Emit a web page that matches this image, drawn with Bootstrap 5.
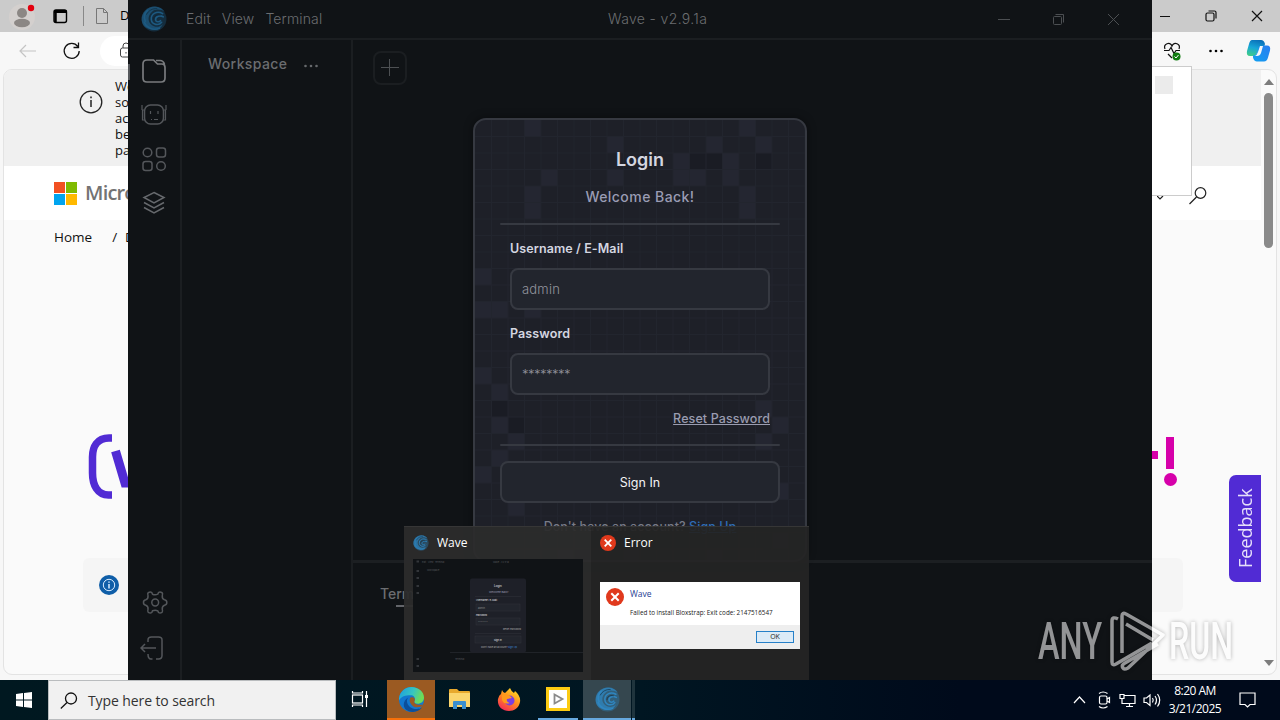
<!DOCTYPE html>
<html lang="en">
<head>
  <meta charset="UTF-8">
  <title>Wave - v2.9.1a</title>
  <meta name="viewport" content="width=device-width, initial-scale=1">
  <link href="https://cdn.jsdelivr.net/npm/bootstrap@5.3.2/dist/css/bootstrap.min.css" rel="stylesheet">
  <style>
    body { font-family: "Open Sans", "Noto Sans", sans-serif; font-size: 13px; color: #111; }
    svg { display: block; flex: none; }
    .desktop { width: 1280px; height: 720px; background: #eef2f8; }
    .win { position: absolute; top: 0; height: 680px; }

    /* browser behind */
    .browser { left: 0; width: 1280px; background: #f7f7f7; }
    .tabstrip { height: 32px; background: #cbcbcb; }
    .toolbar { height: 37px; }
    .toolbar .address { width: 60px; height: 30px; border-radius: 15px; background: #fff; margin-left: 19px; padding-left: 19px; }
    .webpage { margin: 0 3px 5px; border: 1px solid #e3e3e3; border-radius: 9px; background: #fafafa; }
    .content-col { width: 1257px; }
    .notice { height: 96px; background: #f0f0f0; padding: 8px 0 0 75px; line-height: 16px; }
    .sitehead { height: 54px; background: #fff; padding-left: 50px; }
    .mslogo { font-size: 20px; font-weight: 600; color: #737373; letter-spacing: -.8px; margin-left: 4px; }
    .crumbs { height: 34px; padding-left: 50px; font-size: 13.5px; }
    .hero { margin-top: 179px; height: 76px; padding: 0 79px 0 84px; }
    .note-box { margin: 49px 78px 0 79px; height: 54px; background: #f5f5f5; border-radius: 6px; padding-left: 16px; }
    .scrollbar { width: 15px; padding: 9px 0 8px; }
    .scrollbar .thumb { width: 9px; height: 155px; border-radius: 5px; background: #8a8a8a; margin-top: 8px; }
    .feedback { position: absolute; left: 1229px; top: 475px; width: 32px; height: 107px; background: #512bd4; border-radius: 0 7px 7px 0; color: #e6dffa; font-size: 18px; writing-mode: vertical-rl; transform: rotate(180deg); }
    .popup { position: absolute; left: 1100px; top: 66px; width: 92px; height: 130px; background: #fff; border: 1px solid #ccc; padding: 9px 18px; }
    .popup div { width: 18px; height: 18px; background: #ebebeb; }

    /* Wave */
    .wave { left: 128px; width: 1024px; background: #101316; color: #6b6d70; font-family: Inter, "Open Sans", sans-serif; }
    .titlebar { height: 40px; border-bottom: 2px solid #1b1e21; font-size: 14px; font-weight: 300; padding-left: 13px; }
    .titlebar .menu { margin-left: 19px; gap: 11px; width: 422px; letter-spacing: .15px; padding-bottom: 1px; }
    .titlebar .caption { letter-spacing: .35px; padding-bottom: 1px; }
    .titlebar .buttons { margin-left: auto; padding-right: 0; margin-right: -2px; }
    .rail { width: 54px; border-right: 2px solid #1b1e21; padding: 18px 0 16px; }
    .rail::before { content: ""; position: absolute; left: 0; top: 64px; width: 2px; height: 16px; background: #55585c; }
    .side { width: 171px; border-right: 2px solid #1b1e21; padding: 13px 0 0 26px; font-size: 14px; font-weight: 500; }
    .editor { height: 520px; padding: 11px 20px; }
    .plus { width: 34px; height: 34px; border: 2px solid #1b1e21; border-radius: 8px; }
    .terminal { border-top: 3px solid #1c1f22; padding: 20px 27px; font-size: 14px; font-weight: 500; }
    .terminal i { display: block; width: 36px; height: 2px; background: #63656a; margin: 1px 0 0 16px; }

    .login { position: absolute; left: 345px; top: 118px; width: 334px; height: 444px; border: 2px solid #363941; border-radius: 13px; background: #1e2028; color: #d4d6e0; padding: 27px 25px; overflow: hidden; box-shadow: 0 0 10px #0006; }
    .tiles { position: absolute; left: 0; top: 0; opacity: .62; }
    .login-form { position: relative; }
    .login h1 { font-size: 18px; font-weight: 600; line-height: 25px; margin: 0; }
    .login .sub { font-size: 14px; font-weight: 500; line-height: 20px; margin-top: 15px; color: #9a9cb4; }
    .rule { height: 2px; border-radius: 2px; background: #363941; }
    .login label { font-size: 12.5px; font-weight: 600; line-height: 18px; letter-spacing: .1px; }
    .login .form-control { height: 42px; border: 2px solid #363941; border-radius: 8px; background: #22252d; color: #92949d; font-size: 13px; font-weight: 300; padding: 0 10px; line-height: 38px; }
    .login .btn { height: 42px; border: 2px solid #363941; border-radius: 8px; background: #22252d; color: #f3f3f5; font-size: 12.5px; padding: 2px 0 0; }

    /* thumbnails over the taskbar */
    .flyout { position: absolute; left: 404px; top: 526px; width: 405px; height: 154px; background: #242424f0; color: #fff; font-size: 12px; border-top: 1px solid #363636; }
    .thumb-item { padding: 7px 0 0 9px; }
    .thumb-item.first { width: 187px; background: #ffffff09; }
    .mini-wave { width: 170px; height: 113px; background: #101316; margin-top: 7px; color: #777; }
    .mini-error { width: 200px; height: 67px; margin-top: 30px; background: #fff; color: #222; }
    .mini-error .foot { height: 24px; background: #eee; padding-right: 6px; }
    .mini-error .ok { width: 38px; height: 12px; border: 1px solid #2680c8; background: #dcebf7; font-size: 7px; line-height: 10px; }

    .taskbar { position: absolute; left: 0; top: 680px; width: 1280px; height: 40px; background: linear-gradient(90deg, #001820 0, #001622 50%, #000a1b 75%, #000a1b); color: #fff; font-size: 12px; }
    .start { width: 48px; }
    .searchbox { width: 288px; height: 40px; background: #f1f1f1; border: 1px solid #b9bcbe; color: #333; font-size: 14px; padding: 1px 0 0 11px; }
    .task { width: 48px; height: 40px; border-bottom: 2px solid transparent; }
    .watermark { position: absolute; left: 1036px; top: 606px; filter: drop-shadow(0 0 2px #0008); opacity: .55; }
  </style>
</head>
<body>
<!-- shared symbols -->
<svg width="0" height="0" class="position-absolute">
  <symbol id="swirl" viewBox="0 0 24 24">
    <circle cx="12" cy="12" r="11.500" fill="currentColor" opacity=".38"/>
    <path d="M1 15C-1 8 5 .5 13 .5c4 0 7 2 9 5-4-3-9-3-12 0-4 3.500-4 9 0 12 3 2.500 8 2 10-1-1 4-5 6-9 5.500C6 21.500 2 19 1 15z" fill="currentColor" opacity=".75"/>
    <path d="M20 7c-5-3-11 0-10.500 5.500.5 5 7 6 9.500 2.500M20.500 10c-4-2-7.500 0-7 3 .5 2 3.500 2 4.500.5M3 15c2 5 8 8 14 5.500M6 4C2 8 3 12 4 14" fill="none" stroke="currentColor" stroke-width="1.500" stroke-linecap="round"/>
    <path d="M18 8.500c-4-1-6.500 1-6.500 4M5 8c2-4 6-6 10-5.500" fill="none" stroke="#0d2333" stroke-width=".8" opacity=".7"/>
  </symbol>
  <symbol id="err" viewBox="0 0 16 16"><circle cx="8" cy="8" r="8" fill="#e0391c"/><path d="M4.700 4.700l6.600 6.600M11.300 4.700l-6.600 6.600" stroke="#fff" stroke-width="1.800"/></symbol>
</svg>

<div class="desktop position-relative overflow-hidden">

  <div class="win browser d-flex flex-column">
    <div class="tabstrip d-flex align-items-center">
      <svg width="128" height="32" fill="none">
        <circle cx="22" cy="17" r="13" fill="#d4d0ce"/><circle cx="22" cy="13" r="5" fill="#8c8784"/><ellipse cx="22" cy="23" rx="8" ry="4.200" fill="#8c8784"/><circle cx="31" cy="8" r="3.200" fill="#e3000f"/>
        <rect x="54" y="10" width="12.500" height="12.500" rx="2" stroke="#000" stroke-width="1.400"/><path d="M54 11.500h12.500" stroke="#000" stroke-width="3"/><path d="M55.500 12v10" stroke="#000" stroke-width="2.500"/>
        <path d="M83.500 6v20" stroke="#888"/>
        <path d="M96.500 8.500h7l4 4v11h-11zM103.500 8.500v4h4" stroke="#777"/>
        <text x="120" y="20" fill="#000" font-size="13">D</text>
      </svg>
      <svg class="ms-auto" width="128" height="32" fill="none" stroke="#111" stroke-width="1.200">
        <path d="M8 16.500h10M100 11l10 10M110 11l-10 10"/><rect x="54" y="13" width="8" height="8" rx="1.500"/><path d="M56.500 11h6q1.500 0 1.500 1.500v6"/>
      </svg>
    </div>
    <div class="toolbar d-flex align-items-center">
      <svg width="81" height="37" fill="none"><path d="M21 19h15M26 13l-6 6 6 6" stroke="#c4c4c4" stroke-width="1.200"/><path d="M77.800 14.500a7.500 7.500 0 1 0 1.400 4.500M78.500 10.500v5h-5" stroke="#111" stroke-width="1.300"/></svg>
      <div class="address d-flex align-items-center"><svg width="14" height="18" fill="none" stroke="#444"><rect x="1.500" y="6" width="11" height="9" rx="2"/><path d="M4 6V4a3 3 0 0 1 6 0v2M7 10v1.500"/></svg></div>
      <svg class="ms-auto" width="128" height="37" fill="none">
        <path d="M16 22l4 4M13 17c-2-5 5-8 7-3 2-5 9-2 7 3M12 18.500h5l2-3 3 6 2-3h4" stroke="#111" stroke-width="1.200"/><circle cx="24.500" cy="24.500" r="4" fill="#107c10"/><path d="M22.500 24.500l1.500 1.500 2.500-3" stroke="#fff"/>
        <circle cx="58.500" cy="19" r="1.300" fill="#000"/><circle cx="64" cy="19" r="1.300" fill="#000"/><circle cx="69.500" cy="19" r="1.300" fill="#000"/>
        <defs><linearGradient id="cp1" x1=".6" y1="0" x2=".3" y2="1"><stop stop-color="#0a6fb8"/><stop offset=".5" stop-color="#17a6d8"/><stop offset="1" stop-color="#3ecb8a"/></linearGradient><linearGradient id="cp2" x1="1" y1="0" x2="0" y2="1"><stop stop-color="#2a7df0"/><stop offset="1" stop-color="#11a0f0"/></linearGradient></defs>
        <path d="M100 8h9q3 0 4 4l-1 3h-4l-3 6q-1 3-4 3h-3q-4 0-3-5l2-7q1-4 3-4z" fill="url(#cp1)"/>
        <path d="M112 13.500h3q4 0 3 5l-2 7q-1 4-4 4h-7q-3 0-4-4v-2q3 0 4-3l2-6z" fill="url(#cp2)"/>
        <path d="M108 14h3l-2 7q-1 3-4 3h-2q2-1 3-4z" fill="#f7f7f7"/>
      </svg>
    </div>
    <div class="webpage flex-grow-1 d-flex overflow-hidden">
      <div class="content-col">
        <div class="notice d-flex">
          <svg style="margin:12px 10px 0 0" width="26" height="26" fill="none" stroke="#222" stroke-width="1.300"><circle cx="12" cy="12" r="10.800"/><path d="M12 10v7M12 6.500v1.800" stroke-width="1.500"/></svg>
          <div>We<br>some<br>access<br>before<br>pages</div>
        </div>
        <div class="sitehead d-flex align-items-center">
          <svg width="23" height="23"><path fill="#f25022" d="M0 0h11v11H0z"/><path fill="#7fba00" d="M12 0h11v11H12z"/><path fill="#00a4ef" d="M0 12h11v11H0z"/><path fill="#ffb900" d="M12 12h11v11H12z"/></svg>
          <span class="mslogo ps-1">Microsoft</span>
          <svg class="ms-auto" width="104" height="30" fill="none" stroke="#222" stroke-width="1.200"><path d="M0 18l3 3 3-3"/><circle cx="43.500" cy="15" r="5.300"/><path d="M39.500 19l-7 7"/></svg>
        </div>
        <div class="crumbs d-flex align-items-center"><span>Home</span><span class="ms-3 ps-1">/</span><span class="ms-2">Download</span></div>
        <div class="hero d-flex justify-content-between">
          <svg width="60" height="76" fill="none" stroke="#512bd4"><path d="M24 5h-3C9 5 4.500 14 4.500 24v16c0 12 5 22 16 22H24" stroke-width="7.500"/><path d="M27.500 18l9.500 32h5" stroke-width="9"/></svg>
          <svg width="57" height="76" fill="#d600aa"><path d="M0 18h33v8H0zM41 4h8v32h-8z"/><circle cx="45.500" cy="46.500" r="6.500"/></svg>
        </div>
        <div class="note-box d-flex align-items-center"><svg width="20" height="20" fill="none" stroke="#d9ecff"><circle cx="10" cy="10" r="10" fill="#0f5ea8" stroke="none"/><circle cx="10" cy="10" r="5.700"/><path d="M10 9v4.500M10 6.500v1.300" stroke-width="1.500"/></svg></div>
      </div>
      <div class="scrollbar d-flex flex-column align-items-center">
        <svg width="10" height="6"><path d="M5 0l5 6H0z" fill="#7d7d7d"/></svg><div class="thumb"></div>
        <svg class="mt-auto" width="10" height="6"><path d="M5 6l5-6H0z" fill="#7d7d7d"/></svg>
      </div>
    </div>
    <div class="popup d-flex justify-content-end"><div></div></div>
    <div class="feedback d-flex align-items-center justify-content-center">Feedback</div>
  </div>

  <div class="win wave d-flex flex-column">
    <div class="titlebar d-flex align-items-center">
      <svg width="26" height="26" style="color:#1d5a82"><use href="#swirl"/></svg>
      <div class="menu d-flex"><span>Edit</span><span>View</span><span>Terminal</span></div>
      <span class="caption">Wave - v2.9.1a</span>
      <svg class="buttons" width="156" height="20" fill="none" stroke="#4c4f52"><path d="M0 10.500h12M110 5l11 11M121 5l-11 11"/><rect x="55.500" y="7.500" width="8" height="8" rx="1"/><path d="M57.500 5.500h8v8"/></svg>
    </div>
    <div class="d-flex flex-grow-1">
      <div class="rail d-flex flex-column align-items-center">
        <svg width="28" height="160" fill="none" stroke="#54575b" stroke-width="1.500">
          <path stroke="#797b7e" stroke-width="1.700" d="M7 2h6.500l4 4H22q3 0 3 3.500V20q0 4-4 4H7q-4 0-4-4V6q0-4 4-4zM16 2.500h4q3.500 0 4.500 4"/>
          <rect x="4.500" y="47" width="19" height="19" rx="6"/><path d="M4.500 52h-2v10h2M23.500 52h2v10h-2M2 47v5M26 47v5M10.500 53v3M18 53v3M11 61.500h1M14 61.500h4" stroke-width="1.200"/>
          <circle cx="7.500" cy="94.500" r="4.300"/><rect x="16.500" y="90" width="9" height="9" rx="2.500"/><rect x="3" y="103.500" width="9" height="9" rx="2.500"/><circle cx="21" cy="108" r="4.300"/>
          <path stroke="#66696d" d="M14 134.500l10 5-10 5.500-10-5.500zM4 144.500l10 5.500 10-5.500M4 149.500l10 5.500 10-5.500"/>
        </svg>
        <svg class="mt-auto" width="28" height="75" fill="none" stroke="#54575b" stroke-width="1.500">
          <path stroke-linejoin="round" d="M12.500 5.200Q15.200 6.500 17.800 5.200L18.500 3.500Q20 2.300 22 3.600 23 4.600 22.300 6.500 21.800 9.800 24.500 10.700 27 11.200 26.800 13.500 27 15.800 24.500 16.200 21.800 17.200 22.300 20.500 23 22.400 22 23.400 20 24.700 18.500 23.500L17.800 21.800Q15.200 20.500 12.500 21.800L11.800 23.500Q10.300 24.700 8.300 23.400 7.300 22.400 8 20.500 8.500 17.200 5.800 16.200 3.300 15.800 3.500 13.500 3.300 11.200 5.800 10.700 8.500 9.800 8 6.500 7.300 4.600 8.300 3.600 10.300 2.300 11.800 3.500z"/>
          <circle cx="15.200" cy="13.500" r="3.400"/>
          <path d="M8 53v-2q0-3 3.500-3h7Q22 48 22 51v15.500q0 3.500-3.500 3.500H16M8 65q0 5 3 5h1.500M1 59h15M5 55l-4 4 4 4"/>
        </svg>
      </div>
      <div class="side d-flex align-items-start"><span style="letter-spacing:.4px">Workspace</span><svg class="ms-3 mt-2" width="18" height="8" fill="#66696c"><circle cx="2.500" cy="5" r="1.300"/><circle cx="8" cy="5" r="1.300"/><circle cx="13.500" cy="5" r="1.300"/></svg></div>
      <div class="flex-grow-1">
        <div class="editor"><div class="plus d-flex align-items-center justify-content-center"><svg width="20" height="20" stroke="#4d5053"><path d="M9.500 1v17M1 9.500h18"/></svg></div></div>
        <div class="terminal">Terminal<i></i></div>
      </div>
    </div>

    <div class="login">
      <svg class="tiles" id="tiles" width="332" height="442"></svg>
      <div class="login-form">
        <h1 class="text-center">Login</h1>
        <div class="sub text-center" style="letter-spacing:.45px">Welcome Back!</div>
        <div class="rule" style="margin-top:16px"></div>
        <div style="padding:15px 10px 0">
          <label class="d-block">Username / E-Mail</label>
          <div class="form-control" style="margin-top:10px;letter-spacing:.2px">admin</div>
          <label class="d-block" style="margin-top:15px">Password</label>
          <div class="form-control" style="margin-top:10px;letter-spacing:-.5px">********</div>
          <div class="text-end text-decoration-underline" style="margin-top:15px;font-size:12.5px;line-height:18px;font-weight:500;letter-spacing:.1px;color:#9a9cb0">Reset Password</div>
        </div>
        <div class="rule" style="margin-top:16px"></div>
        <button class="btn w-100 d-block" style="margin-top:15px">Sign In</button>
        <div class="text-center" style="margin-top:15px;font-size:12.5px;line-height:18px;font-weight:500;letter-spacing:.07px;color:#777a86">Don't have an account? <span class="text-decoration-underline" style="color:#2f6cb5">Sign Up</span></div>
      </div>
    </div>
  </div>

  <svg class="watermark" width="220" height="70" fill="none" stroke="#fff" stroke-width="3.500" stroke-linejoin="round">
    <g fill="#fff" stroke="none" font-family="Roboto, sans-serif" font-size="51" font-weight="500"><text x="2" y="53" textLength="64" lengthAdjust="spacingAndGlyphs">ANY</text><text x="133" y="53" textLength="64" lengthAdjust="spacingAndGlyphs">RUN</text></g>
    <path d="M82 13q-6-3-6 2v41q0 4 4 2l36-21M86 47V10q0-4 4-2l37 21-35 33q-4 2-5 0-2-3 2-5l33-19M90 18l27 16"/>
  </svg>

  <div class="flyout d-flex">
    <div class="thumb-item first">
      <div class="d-flex align-items-center"><svg width="16" height="16" style="color:#2c80b8"><use href="#swirl"/></svg><span class="ms-2">Wave</span></div>
      <svg class="mini-wave" viewBox="0 0 170 113" fill="#85878d" font-size="3" font-family="Inter, sans-serif">
        <g font-size="2.300" fill="#55585c"><text x="9" y="4">Edit</text><text x="15" y="4">View</text><text x="22" y="4">Terminal</text><text x="80" y="4">Wave - v2.9.1a</text><text x="14" y="12">Workspace</text><text x="42" y="101">Terminal</text></g>
        <path d="M3.500 2.500h2.500M3.500 12h2.500M3.500 19h2.500M3.500 27h2.500M3.500 34h2.500M3.500 100h2.500M3.500 107h2.500" stroke="#33363a" stroke-width="2"/>
        <path d="M37 93.500h133" stroke="#202328"/>
        <rect x="57" y="19.500" width="56" height="74" rx="2" fill="#1e2028"/>
        <path d="M62 37.500h46M62 74.500h46" stroke="#30333b" stroke-width=".5"/><g fill="#22252d" stroke="#30333b" stroke-width=".5"><rect x="63" y="45" width="44" height="7"/><rect x="63" y="59" width="44" height="7"/><rect x="62" y="77" width="46" height="7"/></g>
        <g fill="#e2e3e8"><text x="81" y="27.500">Login</text><text x="76" y="33.500" font-size="2.700" fill="#9a9cb4">Welcome Back!</text><text x="63" y="42" font-size="2.400">Username / E-Mail</text><text x="63" y="56.500" font-size="2.400">Password</text><text x="65" y="49.500" font-size="2.400" fill="#888">admin</text><text x="65" y="63.500" font-size="2.400" fill="#888">********</text><text x="90" y="71" font-size="2.400" fill="#aaa">Reset Password</text><text x="81" y="81.500" font-size="2.400">Sign In</text><text x="68" y="89" font-size="2.400" fill="#aaa">Don't have an account?</text><text x="95" y="89" font-size="2.400" fill="#3f8cdc">Sign Up</text></g>
      </svg>
    </div>
    <div class="thumb-item">
      <div class="d-flex align-items-center"><svg width="16" height="16"><use href="#err"/></svg><span class="ms-2">Error</span></div>
      <div class="mini-error d-flex flex-column">
        <div class="d-flex flex-grow-1 pt-1">
          <svg style="margin:2px 6px" width="18" height="18"><use href="#err"/></svg>
          <div><div style="font-size:8.500px;line-height:16px;color:#1f4294">Wave</div><div class="text-nowrap" style="font-size:6.300px;line-height:21px">Failed to install Bloxstrap: Exit code: 2147516547</div></div>
        </div>
        <div class="foot d-flex align-items-center justify-content-end"><div class="ok text-center">OK</div></div>
      </div>
    </div>
  </div>

  <div class="taskbar d-flex align-items-center">
    <div class="start d-flex justify-content-center"><svg width="16" height="16" fill="#fff"><path d="M0 2l7-1v6.500H0zM8 .9L16 0v7.500H8zM0 8.500h7V15l-7-1zM8 8.500h8V16l-8-1z"/></svg></div>
    <div class="searchbox d-flex align-items-center"><svg width="18" height="18" fill="none" stroke="#111" stroke-width="1.300"><circle cx="11" cy="6.500" r="5.500"/><path d="M7 10.500L.8 16.500"/></svg><span style="margin-left:10px;letter-spacing:-.1px">Type here to search</span></div>
    <div class="task d-flex align-items-center justify-content-center"><svg width="18" height="18" fill="none" stroke="#fff" stroke-width="1.200"><rect x="1.500" y="5" width="10" height="8"/><path d="M1.500 1v2h10V1M1.500 17v-2h10v2M15.500 1v16"/><path d="M15.500 5v3" stroke-width="3"/></svg></div>
    <div class="task d-flex align-items-center justify-content-center" style="background:#9b5a22;border-color:#f7700a;margin-left:3px">
      <svg width="25" height="25" viewBox="0 0 24 24"><defs><linearGradient id="e1" x1="0" y1="0" x2="1" y2=".3"><stop stop-color="#1b9de2"/><stop offset=".6" stop-color="#36c5c0"/><stop offset="1" stop-color="#6fdc55"/></linearGradient></defs><circle cx="12" cy="12" r="12" fill="#1277cf"/><path d="M0 11C1 4 6 0 12 0c7 0 12 5 12 10 0 4-3 6-6 6s-4-1-3-3c1-3-1-5-4-5C6 8 2 9 0 13z" fill="url(#e1)"/><path d="M9 10c-3 3-1 10 6 11 3 .4 5 0 7-1-4 5-12 5-16 1-3-4-1-9 3-11z" fill="#0c4f9b"/><path d="M11 10c3-1 5 1 4 3-1 2 0 3.500 3 4h5l-1 1.500c-4 2-9 1-11-3-1-2-1-4 0-5.500z" fill="#9b5a22"/></svg>
    </div>
    <div class="task d-flex align-items-center justify-content-center" style="margin-left:1px"><svg width="22" height="20"><path d="M0 1q0-1 1-1h7l2 2h10q1 0 1 1v15H0z" fill="#e8a92d"/><path d="M0 4h21v14H0z" fill="#fbd56d"/><path d="M4 20v-7q0-1 1-1h11q1 0 1 1v7h-4v-4H8v4z" fill="#3a8fd0"/></svg></div>
    <div class="task d-flex align-items-center justify-content-center" style="margin-left:1px"><svg width="24" height="24"><defs><linearGradient id="ff" x1=".8" y1="0" x2=".2" y2="1"><stop stop-color="#ffe226"/><stop offset=".5" stop-color="#ff8a1e"/><stop offset="1" stop-color="#f5235c"/></linearGradient></defs><path d="M5 3q1 3 3 3l5-5q1 3 4 5l1-2q6 5 5 11c-1 6-6 9-11 9C5 24 0 19 1 12q1-4 3-5z" fill="url(#ff)"/><circle cx="12.500" cy="13.500" r="5" fill="#7a3fe0"/><path d="M5 8q5-2 8 1l2 2-5 1q-1 3 3 4-6 2-8-3z" fill="#ff9a1c"/></svg></div>
    <div class="task d-flex align-items-center justify-content-center" style="border-color:#67a9df;width:40px;margin:0 5px"><svg width="24" height="24"><path fill="#fccb12" d="M0 0h24v24H0z"/><path fill="#fff" d="M3 3h18v18H3z"/><path d="M8.500 7.500l8 4.500-8 4.500z" fill="none" stroke="#8a8a8a" stroke-width="1.800"/></svg></div>
    <div class="task d-flex align-items-center justify-content-center" style="background:#35474f;border-color:#67a9df;color:#2f86c0"><svg width="25" height="25"><use href="#swirl"/></svg></div>
    <div style="width:3px;height:40px;margin-left:1px;background:#1f343d;border-bottom:2px solid #67a9df"></div>
    <svg class="ms-auto" width="90" height="24" fill="none" stroke="#fff" stroke-width="1.200">
      <path d="M1 15l5.500-6 5.500 6"/><rect x="26.500" y="8" width="7.500" height="8" rx="1.500"/><path d="M34 11l2.500-1.500v5L34 13M26 5.500q4-3 8.500 0M26 18.500q4 3 8.500 0"/>
      <path d="M51 7.500h11v8H52M56.500 15.500v3M53 18.500h7M47 6.500h4v4h-4zM49 10.500v5h3"/>
      <path d="M71 10h2.500l3.500-3v10.500l-3.500-3H71zM79.500 10q1.500 2 0 4.500M82 8q3 4 0 8.500M84.500 6q4.500 6 0 12.500"/>
    </svg>
    <div class="text-center" style="line-height:18px;margin-left:2px;width:60px;letter-spacing:-.5px">8:20 AM<br>3/21/2025</div>
    <svg style="margin:0 24px 0 14px" width="17" height="18" fill="none" stroke="#fff" stroke-width="1.200"><path d="M1 2h15v11.500h-5L8.500 16 6 13.500H1z"/></svg>
  </div>
</div>

<script>
  // mosaic behind the login form: 16.5px cells with a few lit ones
  const CELL = 16.5;
  const tiles = document.getElementById("tiles");
  const lit = [[3,0],[16,0],[8,1],[14,1],[17,1],[12,2],[15,2],[12,3],[13,3],[4,3],[15,3],[3,4],[16,4],[16,5],[3,5],[8,3],[0,9],[0,11],[1,11],[3,11],[0,15],[1,16],[2,18],[1,18],[2,19],[17,17],[18,18],[1,20],[17,19],[0,21],[18,22],[2,23],[18,25],[5,26],[9,26],[14,26]];
  const dark = [[14,2],[13,2],[2,18],[10,2],[6,26],[17,2],[1,17]];
  let out = "";
  lit.forEach(([c, r]) => out += `<rect x="${c * CELL}" y="${r * CELL}" width="${CELL}" height="${CELL}" fill="#292b37"/>`);
  dark.forEach(([c, r]) => out += `<rect x="${c * CELL}" y="${r * CELL}" width="${CELL}" height="${CELL}" fill="#191b22"/>`);
  for (let i = 1; i < 27; i++) {
    out += `<path d="M0 ${i * CELL}H332" stroke="#262932"/>`;
    if (i < 21) out += `<path d="M${i * CELL} 0V442" stroke="#262932"/>`;
  }
  tiles.innerHTML = out;
</script>
<script src="https://cdn.jsdelivr.net/npm/bootstrap@5.3.2/dist/js/bootstrap.bundle.min.js"></script>
</body>
</html>
